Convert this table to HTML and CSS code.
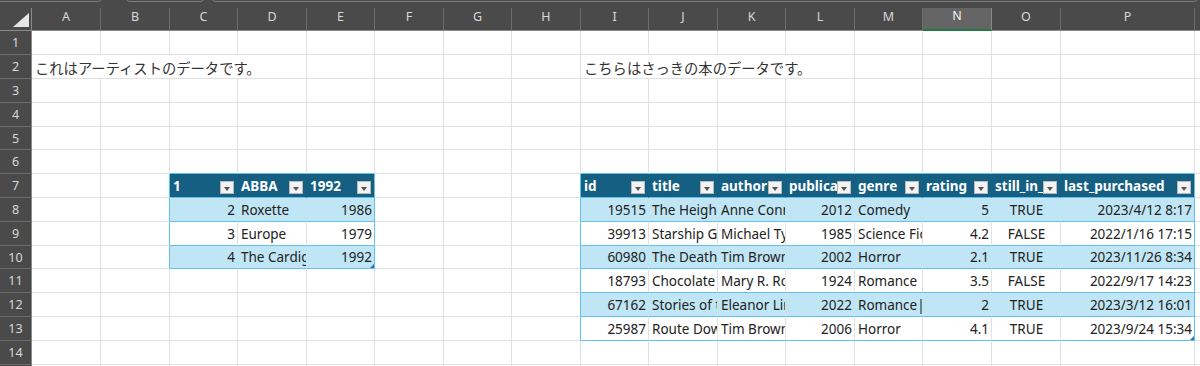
FILE: index.html
```html
<!DOCTYPE html>
<html lang="ja">
<head>
<meta charset="utf-8">
<title>Sheet</title>
<link rel="stylesheet" href="styles.css">
</head>
<body>
<div class="topbar"><span class="tab t1"></span><span class="tab t2"></span><span class="tab t3"></span></div>
<div class="sheet">
  <div class="corner"><svg class="corner-tri" width="31" height="22" viewBox="0 0 31 22"><polygon points="29,5 29,19 13,19" fill="#e6e6e6"/></svg></div>
  <div class="ch">A</div><div class="ch">B</div><div class="ch">C</div><div class="ch">D</div><div class="ch">E</div><div class="ch">F</div><div class="ch">G</div><div class="ch">H</div><div class="ch">I</div><div class="ch">J</div><div class="ch">K</div><div class="ch">L</div><div class="ch">M</div><div class="ch sel">N</div><div class="ch">O</div><div class="ch">P</div><div class="ch"></div>

  <div class="rh">1</div>
  <div class="c"></div><div class="c"></div><div class="c"></div><div class="c"></div><div class="c"></div><div class="c"></div><div class="c"></div><div class="c"></div><div class="c"></div><div class="c"></div><div class="c"></div><div class="c"></div><div class="c"></div><div class="c"></div><div class="c"></div><div class="c"></div><div class="c"></div>

  <div class="rh">2</div>
  <div class="c span4">これはアーティストのデータです。</div>
  <div class="c"></div><div class="c"></div><div class="c"></div><div class="c"></div>
  <div class="c span4">こちらはさっきの本のデータです。</div>
  <div class="c"></div><div class="c"></div><div class="c"></div><div class="c"></div><div class="c"></div>

  <div class="rh">3</div>
  <div class="c"></div><div class="c"></div><div class="c"></div><div class="c"></div><div class="c"></div><div class="c"></div><div class="c"></div><div class="c"></div><div class="c"></div><div class="c"></div><div class="c"></div><div class="c"></div><div class="c"></div><div class="c"></div><div class="c"></div><div class="c"></div><div class="c"></div>

  <div class="rh">4</div>
  <div class="c"></div><div class="c"></div><div class="c"></div><div class="c"></div><div class="c"></div><div class="c"></div><div class="c"></div><div class="c"></div><div class="c"></div><div class="c"></div><div class="c"></div><div class="c"></div><div class="c"></div><div class="c"></div><div class="c"></div><div class="c"></div><div class="c"></div>

  <div class="rh">5</div>
  <div class="c"></div><div class="c"></div><div class="c"></div><div class="c"></div><div class="c"></div><div class="c"></div><div class="c"></div><div class="c"></div><div class="c"></div><div class="c"></div><div class="c"></div><div class="c"></div><div class="c"></div><div class="c"></div><div class="c"></div><div class="c"></div><div class="c"></div>

  <div class="rh">6</div>
  <div class="c"></div><div class="c"></div>
  <div class="c tt"></div><div class="c tt"></div><div class="c tt"></div>
  <div class="c"></div><div class="c"></div><div class="c"></div>
  <div class="c tt"></div><div class="c tt"></div><div class="c tt"></div><div class="c tt"></div><div class="c tt"></div><div class="c tt"></div><div class="c tt"></div><div class="c tt"></div>
  <div class="c"></div>

  <div class="rh">7</div>
  <div class="c"></div><div class="c tl"></div>
  <div class="c th"><span class="lbl">1</span><span class="fb"></span></div>
  <div class="c th"><span class="lbl">ABBA</span><span class="fb"></span></div>
  <div class="c th tr"><span class="lbl">1992</span><span class="fb"></span></div>
  <div class="c"></div><div class="c"></div><div class="c tl"></div>
  <div class="c th"><span class="lbl">id</span><span class="fb"></span></div>
  <div class="c th"><span class="lbl">title</span><span class="fb"></span></div>
  <div class="c th"><span class="lbl">author</span><span class="fb"></span></div>
  <div class="c th"><span class="lbl">publication_year</span><span class="fb"></span></div>
  <div class="c th"><span class="lbl">genre</span><span class="fb"></span></div>
  <div class="c th"><span class="lbl">rating</span><span class="fb"></span></div>
  <div class="c th"><span class="lbl">still_in_stock</span><span class="fb"></span></div>
  <div class="c th tr"><span class="lbl">last_purchased</span><span class="fb"></span></div>
  <div class="c"></div>

  <div class="rh">8</div>
  <div class="c"></div><div class="c tl"></div>
  <div class="c band num">2</div><div class="c band">Roxette</div><div class="c band tr num">1986</div>
  <div class="c"></div><div class="c"></div><div class="c tl"></div>
  <div class="c band num">19515</div><div class="c band">The Heights</div><div class="c band">Anne Connor</div><div class="c band num">2012</div><div class="c band">Comedy</div><div class="c band num">5</div><div class="c band mid">TRUE</div><div class="c band tr num">2023/4/12 8:17</div>
  <div class="c"></div>

  <div class="rh">9</div>
  <div class="c"></div><div class="c tl"></div>
  <div class="c tb num">3</div><div class="c tb">Europe</div><div class="c tb tr num">1979</div>
  <div class="c"></div><div class="c"></div><div class="c tl"></div>
  <div class="c tb num">39913</div><div class="c tb">Starship Galaxy</div><div class="c tb">Michael Tyler</div><div class="c tb num">1985</div><div class="c tb">Science Fiction</div><div class="c tb num">4.2</div><div class="c tb mid">FALSE</div><div class="c tb tr num">2022/1/16 17:15</div>
  <div class="c"></div>

  <div class="rh">10</div>
  <div class="c"></div><div class="c tl"></div>
  <div class="c band num">4</div><div class="c band">The Cardigans</div><div class="c band tr num rsz">1992</div>
  <div class="c"></div><div class="c"></div><div class="c tl"></div>
  <div class="c band num">60980</div><div class="c band">The Death of Stars</div><div class="c band">Tim Brown</div><div class="c band num">2002</div><div class="c band">Horror</div><div class="c band num">2.1</div><div class="c band mid">TRUE</div><div class="c band tr num">2023/11/26 8:34</div>
  <div class="c"></div>

  <div class="rh">11</div>
  <div class="c"></div><div class="c"></div><div class="c"></div><div class="c"></div><div class="c"></div><div class="c"></div><div class="c"></div><div class="c tl"></div>
  <div class="c tb num">18793</div><div class="c tb">Chocolate Dreams</div><div class="c tb">Mary R. Robinson</div><div class="c tb num">1924</div><div class="c tb">Romance</div><div class="c tb num">3.5</div><div class="c tb mid">FALSE</div><div class="c tb tr num">2022/9/17 14:23</div>
  <div class="c"></div>

  <div class="rh">12</div>
  <div class="c"></div><div class="c"></div><div class="c"></div><div class="c"></div><div class="c"></div><div class="c"></div><div class="c"></div><div class="c tl"></div>
  <div class="c band num">67162</div><div class="c band">Stories of the Sea</div><div class="c band">Eleanor Lindsay</div><div class="c band num">2022</div><div class="c band">Romance|Drama</div><div class="c band num">2</div><div class="c band mid">TRUE</div><div class="c band tr num">2023/3/12 16:01</div>
  <div class="c"></div>

  <div class="rh">13</div>
  <div class="c"></div><div class="c"></div><div class="c"></div><div class="c"></div><div class="c"></div><div class="c"></div><div class="c"></div><div class="c tl"></div>
  <div class="c tb num">25987</div><div class="c tb">Route Down</div><div class="c tb">Tim Brown</div><div class="c tb num">2006</div><div class="c tb">Horror</div><div class="c tb num">4.1</div><div class="c tb mid">TRUE</div><div class="c tb tr num rsz">2023/9/24 15:34</div>
  <div class="c"></div>

  <div class="rh">14</div>
  <div class="c"></div><div class="c"></div><div class="c"></div><div class="c"></div><div class="c"></div><div class="c"></div><div class="c"></div><div class="c"></div><div class="c"></div><div class="c"></div><div class="c"></div><div class="c"></div><div class="c"></div><div class="c"></div><div class="c"></div><div class="c"></div><div class="c"></div>

  <div class="rh">15</div>
  <div class="c"></div><div class="c"></div><div class="c"></div><div class="c"></div><div class="c"></div><div class="c"></div><div class="c"></div><div class="c"></div><div class="c"></div><div class="c"></div><div class="c"></div><div class="c"></div><div class="c"></div><div class="c"></div><div class="c"></div><div class="c"></div><div class="c"></div>
</div>
</body>
</html>
```

FILE: styles.css
```css
* {
  box-sizing: border-box;
  margin: 0;
  padding: 0;
}

html, body {
  width: 1200px;
  height: 366px;
  overflow: hidden;
  background: #ffffff;
}

body {
  font-family: "Noto Sans", "Noto Sans CJK JP", sans-serif;
  font-size: 13.5px;
  color: #222222;
}

.topbar {
  height: 8px;
  background: #4a4a4a;
  display: flex;
  overflow: hidden;
}

.tab {
  display: block;
  flex: none;
  height: 10px;
  margin-top: -8px;
  border: 1px solid #7c7c7c;
  border-radius: 5px;
}

.t1 { width: 113px; margin-left: -10px; }
.t2 { width: 80px; margin-left: 22px; }
.t3 { width: 988px; margin-left: 6px; }

.sheet {
  display: grid;
  height: 358px;
  overflow: hidden;
  grid-template-columns: 32px 69px 69px 68px 69px 68px 69px 68px 69px 68px 69px 68px 69px 68px 69px 69px 134px 1fr;
  grid-template-rows: 23px 24px 24px 24px 24px 23px 24px 24px 24px 24px 23px 24px 24px 24px 24px 24px;
}

.corner {
  background: #4a4a4a;
  border-right: 1px solid #8a8a8a;
  border-bottom: 1px solid #8a8a8a;
}

.corner-tri {
  display: block;
}

.ch {
  background: #4a4a4a;
  color: #d8d8d8;
  font-size: 12.5px;
  border-right: 1px solid #6c6c6c;
  border-bottom: 1px solid #8a8a8a;
  display: flex;
  align-items: center;
  justify-content: center;
  padding-bottom: 6px;
}

.ch.sel {
  background: #656565;
  color: #f0f0f0;
  border-bottom: 2px solid #1f7a45;
  border-right-color: #8a8a8a;
}

.rh {
  background: #4a4a4a;
  color: #d8d8d8;
  font-size: 12.5px;
  border-right: 1px solid #8a8a8a;
  border-bottom: 1px solid #6c6c6c;
  display: flex;
  align-items: center;
  justify-content: center;
}

.c {
  border-right: 1px solid #e1e1e1;
  border-bottom: 1px solid #e1e1e1;
  padding: 0 2px 0 3px;
  white-space: nowrap;
  overflow: hidden;
  min-width: 0;
  display: flex;
  align-items: center;
}

.span4 {
  grid-column: span 4;
  font-family: "Noto Sans CJK JP", sans-serif;
  font-size: 14.3px;
  color: #333333;
  padding-top: 2px;
}

.num {
  justify-content: flex-end;
}

.mid {
  justify-content: center;
}

.tt {
  border-bottom-color: #62c0ec;
}

.tl {
  border-right-color: #62c0ec;
}

.tb {
  border-bottom-color: #62c0ec;
}

.band {
  background: #c0e6f5;
  border-right-color: #c0e6f5;
  border-bottom-color: #62c0ec;
}

.th {
  background: #156082;
  border-right-color: #156082;
  border-bottom-color: #62c0ec;
  color: #ffffff;
  font-weight: bold;
  padding: 0 3px 0 3px;
}

.tr {
  border-right-color: #62c0ec;
}

.lbl {
  flex: 1 1 auto;
  min-width: 0;
  overflow: hidden;
}

.fb {
  flex: none;
  position: relative;
  width: 14px;
  height: 13px;
  margin-left: auto;
  align-self: flex-end;
  margin-bottom: 3px;
  background: #f3f3f3;
  border: 1px solid #b9b9b9;
}

.fb::after {
  content: "";
  position: absolute;
  left: 3px;
  top: 5px;
  border-left: 3.5px solid transparent;
  border-right: 3.5px solid transparent;
  border-top: 4px solid #555555;
}

.rsz {
  position: relative;
}

.rsz::after {
  content: "";
  position: absolute;
  right: 0;
  bottom: 0;
  border-style: solid;
  border-width: 0 0 4px 4px;
  border-color: transparent transparent #2e6fc0 transparent;
}
```
